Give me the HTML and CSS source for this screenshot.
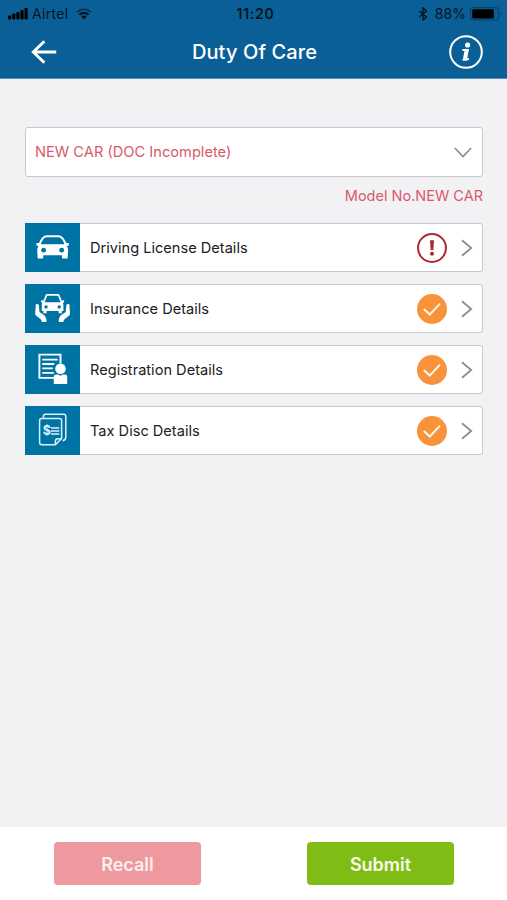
FILE: index.html
```html
<!DOCTYPE html>
<html lang="en">
<head>
    <meta charset="UTF-8">
    <meta name="viewport" content="width=device-width, initial-scale=1.0">
    <title>Duty Of Care</title>
    <link rel="stylesheet" href="styles.css">
</head>
<body>
<header class="header">
    <div class="status-bar">
        <div class="status-left">
            <svg class="signal" width="20" height="12" viewBox="0 0 20 12">
                <rect x="0" y="7.5" width="3.2" height="4" rx="1"/>
                <rect x="4.2" y="5.5" width="3.2" height="6" rx="1"/>
                <rect x="8.3" y="4" width="3.2" height="7.5" rx="1"/>
                <rect x="12.4" y="2" width="3.2" height="9.5" rx="1"/>
                <rect x="16.5" y="0" width="3.2" height="11.5" rx="1"/>
            </svg>
            <span class="carrier">Airtel</span>
            <svg class="wifi" width="16" height="12" viewBox="0 0 16 12" fill="none" stroke="#06131f">
                <path d="M1 4.2a10 10 0 0 1 14 0" stroke-width="1.8" opacity="0.55"/>
                <path d="M3.4 6.8a6.6 6.6 0 0 1 9.2 0" stroke-width="2.2"/>
                <path d="M8 11.6L5.2 8.8a3.8 3.8 0 0 1 5.6 0z" fill="#06131f" stroke="none"/>
            </svg>
        </div>
        <div class="clock">11:20</div>
        <div class="status-right">
            <svg class="bluetooth" width="10" height="14" viewBox="0 0 10 14" fill="none" stroke="#06131f" stroke-width="1.4">
                <path d="M1.3 4l7.2 6L5 13V1l3.5 3-7.2 6"/>
            </svg>
            <span class="percent">88%</span>
            <svg class="battery" width="33" height="14" viewBox="0 0 33 14">
                <rect x="0.6" y="0.6" width="27.8" height="12.3" rx="2.5" fill="none" stroke="#06436b" stroke-width="1.1"/>
                <rect x="2.2" y="2.2" width="21.6" height="9.2" rx="1" fill="#000"/>
                <path d="M30 5v3.6q1.3-.6 1.3-1.8T30 5z" fill="#06436b"/>
            </svg>
        </div>
    </div>
    <div class="nav-bar">
        <svg class="back" width="26" height="26" viewBox="0 0 26 26">
            <path d="M13.4 2.2L2.3 13l11.1 10.8M2.6 13h22.6" fill="none" stroke="#fff" stroke-width="2.9"/>
        </svg>
        <h1>Duty Of Care</h1>
        <svg class="info" width="34" height="34" viewBox="0 0 34 34">
            <circle cx="17" cy="17" r="15.8" fill="none" stroke="#fff" stroke-width="2"/>
            <circle cx="18.6" cy="10" r="2.6" fill="#fff"/>
            <path d="M13.4 15h5.4l-2 8.5q-.2 1.2 1.4.9l1.8-.7M13.6 24.8h4.4" fill="none" stroke="#fff" stroke-width="1.8"/>
            <path d="M17.8 14.2L15.8 25" fill="none" stroke="#fff" stroke-width="4"/>
        </svg>
    </div>
</header>

<main class="content">
    <div class="select">
        <span>NEW CAR (DOC Incomplete)</span>
        <svg width="18" height="11" viewBox="0 0 18 11">
            <path d="M.8 1L9 9.6 17.2 1" fill="none" stroke="#8e8e8e" stroke-width="1.7"/>
        </svg>
    </div>
    <p class="model">Model No.NEW CAR</p>

    <div class="list">
        <div class="item">
            <div class="item-icon">
                <svg width="55" height="48" viewBox="0 0 55 48">
                    <path d="M14.3 22.5Q17 13.6 21.4 13.3h12.4Q38.2 13.6 41 22.5" fill="none" stroke="#fff" stroke-width="2"/>
                    <path d="M11.2 20.2l4-.5 1.3 1.5h22.3l1.3-1.5 4 .5-.5 2.5-1.8.3q1.4 2 1.3 4.2l-.5 8.2h-5.5v-3.1H18.2v3.1h-5.5l-.5-8.2q0-2.2 1.3-4.2l-1.8-.3z" fill="#fff"/>
                    <circle cx="18.6" cy="27.2" r="2.4" fill="#0073a5"/>
                    <circle cx="36.7" cy="27.2" r="2.4" fill="#0073a5"/>
                </svg>
            </div>
            <span class="item-title">Driving License Details</span>
            <svg class="badge" width="30" height="30" viewBox="0 0 30 30">
                <circle cx="15" cy="15" r="14" fill="none" stroke="#b3262e" stroke-width="2"/>
                <path d="M13 7.3h4l-.6 9.8h-2.8z" fill="#b3262e"/>
                <circle cx="15" cy="20.8" r="2" fill="#b3262e"/>
            </svg>
            <svg class="arrow" width="12" height="18" viewBox="0 0 12 18">
                <path d="M1 1.2L10.2 9 1 16.8" fill="none" stroke="#8e8e8e" stroke-width="1.8"/>
            </svg>
        </div>

        <div class="item">
            <div class="item-icon">
                <svg width="55" height="48" viewBox="0 0 55 48">
                    <path d="M18.3 19.3l3-7.7q.3-.7 1.2-.7h10.2q.9 0 1.2.7l3 7.7" fill="none" stroke="#fff" stroke-width="1.7"/>
                    <path d="M15.9 16.3l2.7.3.5 1.7h17l.5-1.7 2.7-.3-.4 2.2-1 .3.5 2.3v6h-1.6v2.2h-3.2v-2.2H21.6v2.2h-3.2v-2.2h-1.6v-6l.5-2.3-1-.3z" fill="#fff"/>
                    <circle cx="21" cy="22.9" r="1.7" fill="#0073a5"/>
                    <circle cx="34.2" cy="22.9" r="1.7" fill="#0073a5"/>
                    <path d="M10.8 20.3q1.8-.8 3 .4l.7 7.3 4.4 3.1q2.8 2.4 2.6 6.9h-4.6q-.2-2.2-1.5-3.1l-4.4-3.5q-.8-.6-.8-2z" fill="#fff"/>
                    <path d="M44.4 20.3q-1.8-.8-3 .4l-.7 7.3-4.4 3.1q-2.8 2.4-2.6 6.9h4.6q.2-2.2 1.5-3.1l4.4-3.5q.8-.6.8-2z" fill="#fff"/>
                </svg>
            </div>
            <span class="item-title">Insurance Details</span>
            <svg class="badge" width="30" height="30" viewBox="0 0 30 30">
                <circle cx="15" cy="15" r="15" fill="#f8923b"/>
                <path d="M6.8 14.9l6 5.6L23 9.6" fill="none" stroke="#fff6e4" stroke-width="2"/>
            </svg>
            <svg class="arrow" width="12" height="18" viewBox="0 0 12 18">
                <path d="M1 1.2L10.2 9 1 16.8" fill="none" stroke="#8e8e8e" stroke-width="1.8"/>
            </svg>
        </div>

        <div class="item">
            <div class="item-icon">
                <svg width="55" height="48" viewBox="0 0 55 48">
                    <path d="M29 32.9H14.4V9.6h21.1v9" fill="none" stroke="#fff" stroke-width="1.9"/>
                    <path d="M17.3 14.7h15.3M17.3 19h12M17.3 23.3h10.5M17.3 27.8h11.5" stroke="#fff" stroke-width="1.8"/>
                    <circle cx="35.5" cy="23.8" r="5.3" fill="#fff"/>
                    <path d="M28.8 39v-7q0-2.4 2.6-2.4h1.6l2.5 1.2 2.5-1.2h1.6q2.6 0 2.6 2.4v7z" fill="#fff"/>
                </svg>
            </div>
            <span class="item-title">Registration Details</span>
            <svg class="badge" width="30" height="30" viewBox="0 0 30 30">
                <circle cx="15" cy="15" r="15" fill="#f8923b"/>
                <path d="M6.8 14.9l6 5.6L23 9.6" fill="none" stroke="#fff6e4" stroke-width="2"/>
            </svg>
            <svg class="arrow" width="12" height="18" viewBox="0 0 12 18">
                <path d="M1 1.2L10.2 9 1 16.8" fill="none" stroke="#8e8e8e" stroke-width="1.8"/>
            </svg>
        </div>

        <div class="item">
            <div class="item-icon">
                <svg width="55" height="48" viewBox="0 0 55 48" fill="none" stroke="#d9f1fa" stroke-width="1.5">
                    <path d="M18.4 12.2v-1.8q0-2.2 2.2-2.2h18q2.2 0 2.2 2.2v20.8q0 2.8-3.2 3.6"/>
                    <path d="M16.8 12.4h17.6q2.2 0 2.2 2.2v17.9l-6.2 6.3H16.8q-2.2 0-2.2-2.2v-22q0-2.2 2.2-2.2z"/>
                    <path d="M36.4 32.7h-3.5q-2.5 0-2.5 2.5v3.4"/>
                    <path d="M26 22.1h8.3M26 25h8.3M26 27.9h8.3" stroke-width="1.5"/>
                    <text x="17.8" y="29.4" class="dollar">$</text>
                </svg>
            </div>
            <span class="item-title">Tax Disc Details</span>
            <svg class="badge" width="30" height="30" viewBox="0 0 30 30">
                <circle cx="15" cy="15" r="15" fill="#f8923b"/>
                <path d="M6.8 14.9l6 5.6L23 9.6" fill="none" stroke="#fff6e4" stroke-width="2"/>
            </svg>
            <svg class="arrow" width="12" height="18" viewBox="0 0 12 18">
                <path d="M1 1.2L10.2 9 1 16.8" fill="none" stroke="#8e8e8e" stroke-width="1.8"/>
            </svg>
        </div>
    </div>
</main>

<footer class="footer">
    <button class="recall">Recall</button>
    <button class="submit">Submit</button>
</footer>
</body>
</html>
```
FILE: styles.css
```css
* {
    margin: 0;
    padding: 0;
    box-sizing: border-box;
    font-family: Inter, 'Liberation Sans', sans-serif;
}

body {
    display: flex;
    flex-direction: column;
    height: 100vh;
    background: #f2f2f4;
    overflow: hidden;
}

svg {
    display: block;
    flex-shrink: 0;
}

.header {
    height: 79px;
    background: #0a6096;
    border-bottom: 1px solid #4d8fb8;
}

.status-bar {
    display: grid;
    grid-template-columns: 1fr auto 1fr;
    align-items: center;
    height: 27px;
    padding: 0 4px 0 8px;
    color: #06131f;
    font-size: 14px;
}

.status-left,
.status-right {
    display: flex;
    align-items: center;
}

.status-right {
    justify-content: flex-end;
}

.signal {
    fill: #000;
}

.carrier {
    margin: 0 8px 0 4px;
    letter-spacing: 0.3px;
}

.clock {
    font-weight: 600;
    letter-spacing: 0.7px;
}

.percent {
    margin: 0 4px 0 7px;
    letter-spacing: 0.1px;
}

.nav-bar {
    display: grid;
    grid-template-columns: 1fr auto 1fr;
    align-items: center;
    height: 50px;
    padding: 0 24px 0 26px;
}

.back {
    margin-left: 5px;
}

.nav-bar h1 {
    color: white;
    font-size: 20px;
    font-weight: 500;
    letter-spacing: 0.1px;
}

.info {
    justify-self: end;
}

.content {
    flex: 1;
    padding: 48px 24px 0 25px;
}

.select {
    display: flex;
    align-items: center;
    justify-content: space-between;
    height: 50px;
    padding: 0 10px 0 9px;
    background: white;
    border: 1px solid #c9c9cd;
    border-radius: 3px;
    color: #d9596b;
    font-size: 14.65px;
}

.select span {
    padding-bottom: 1px;
}

.model {
    height: 37px;
    margin-bottom: 9px;
    line-height: 37px;
    color: #d9596b;
    font-size: 14.5px;
    text-align: right;
}

.list {
    display: grid;
    gap: 12px;
}

.item {
    display: flex;
    align-items: center;
    height: 49px;
    padding-right: 9px;
    background: white;
    border: 1px solid #c9c9cd;
    border-left: none;
    border-radius: 0 3px 3px 0;
}

.item-icon {
    width: 55px;
    height: 49px;
    background: #0073a5;
}

.item-title {
    flex: 1;
    margin-left: 10px;
    color: #202022;
    font-size: 14.6px;
}

.badge {
    margin-right: 14px;
}

.dollar {
    fill: #d9f1fa;
    stroke: none;
    font-size: 12.5px;
    font-weight: 700;
}

.footer {
    display: flex;
    justify-content: space-between;
    height: 73px;
    padding: 15px 53px 0 54px;
    background: white;
}

.footer button {
    width: 147px;
    height: 43px;
    padding-top: 1px;
    border: none;
    border-radius: 4px;
    color: #f7fbe9;
    font-size: 18px;
    font-weight: 600;
    cursor: pointer;
}

.footer .recall {
    background: #ed999f;
    color: #fdeeee;
}

.footer .submit {
    background: #80bc16;
}
```
